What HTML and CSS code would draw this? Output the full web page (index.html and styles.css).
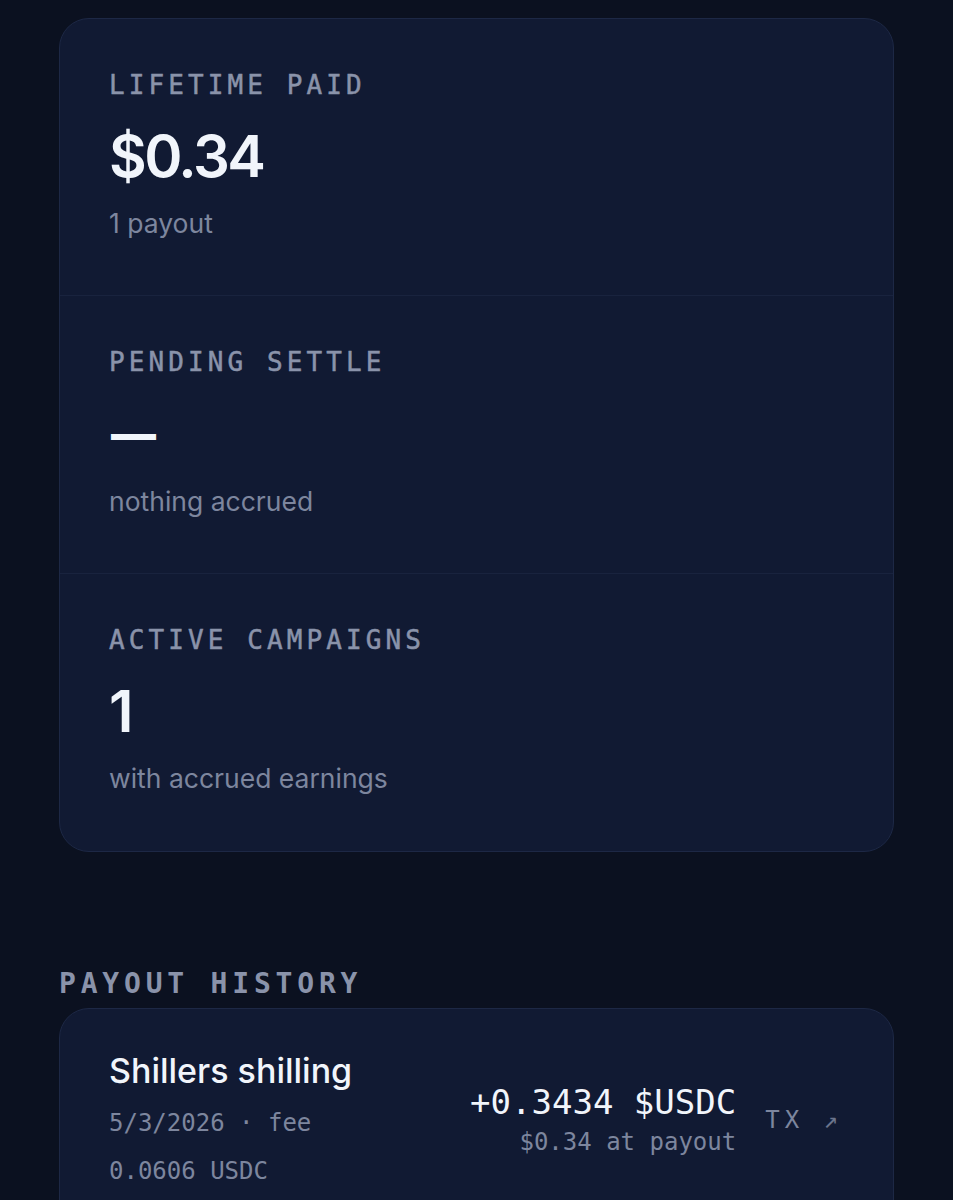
FILE: index.html
```
<!DOCTYPE html>
<html lang="en">
<head>
    <meta charset="UTF-8">
    <meta name="viewport" content="width=device-width, initial-scale=1.0">
    <title>Earnings</title>
    <link rel="stylesheet" href="styles.css">
</head>
<body>
    <div class="page">
        <!-- summary stats -->
        <div class="stats">
            <div class="stat">
                <div class="stat-label">Lifetime paid</div>
                <div class="stat-value">$0.34</div>
                <div class="stat-sub">1 payout</div>
            </div>
            <div class="stat">
                <div class="stat-label">Pending settle</div>
                <div class="stat-value"><span class="empty">—</span></div>
                <div class="stat-sub">nothing accrued</div>
            </div>
            <div class="stat">
                <div class="stat-label">Active campaigns</div>
                <div class="stat-value">1</div>
                <div class="stat-sub">with accrued earnings</div>
            </div>
        </div>

        <h2 class="section-title">Payout history</h2>
        <div class="payouts">
            <div class="payout">
                <div class="payout-info">
                    <div class="payout-name">Shillers shilling</div>
                    <div class="payout-meta">5/3/2026 · fee</div>
                    <div class="payout-meta small-gap">0.0606 USDC</div>
                </div>
                <div class="payout-amount">
                    <div class="amount">+0.3434 $USDC</div>
                    <div class="amount-usd">$0.34 at payout</div>
                </div>
                <a class="tx-link" href="#">TX <span class="arrow">↗</span></a>
            </div>
        </div>
    </div>
</body>
</html>
```
FILE: styles.css
```
body {
    margin: 0;
    padding: 0;
    background: #0b1120;
    font-family: Inter, "Noto Sans", sans-serif;
    color: #f1f5fb;
}
.page {
    padding: 18px 59px 0;
}
.stats {
    background: #111a33;
    border: 1px solid #1d2845;
    border-radius: 30px;
}
.stat {
    padding: 50px 49px 56px;
    border-top: 1px solid #19233e;
}
.stat:first-child {
    border-top: none;
}
.stat:last-child {
    padding-bottom: 57px;
}
.stat-label {
    font-family: "DejaVu Sans Mono", monospace;
    font-size: 26px;
    line-height: 32px;
    letter-spacing: 4.1px;
    text-transform: uppercase;
    color: #8a93aa;
    -webkit-text-stroke: 0.5px #8a93aa;
}
.stat-value {
    margin-top: 20px;
    font-size: 58px;
    line-height: 70px;
    font-weight: 600;
    letter-spacing: -2.5px;
    color: #f1f5fb;
}
.stat-value .empty {
    font-size: 45px;
    font-weight: 800;
    letter-spacing: 0;
    vertical-align: 4px;
    margin-left: 2px;
}
.stat-sub {
    margin-top: 16px;
    font-size: 26.5px;
    line-height: 32px;
    color: #7d869e;
}
.section-title {
    margin: 114px 0 6px;
    font-family: "DejaVu Sans Mono", monospace;
    font-size: 28px;
    line-height: 36px;
    font-weight: bold;
    letter-spacing: 4.8px;
    text-transform: uppercase;
    color: #8a93aa;
}
.payouts {
    background: #111a33;
    border: 1px solid #1d2845;
    border-radius: 30px;
}
.payout {
    display: flex;
    align-items: center;
    padding: 41px 50px 42px 49px;
}
.payout-info {
    flex: 1;
}
.payout-name {
    font-size: 34px;
    line-height: 42px;
    font-weight: 500;
    color: #f1f5fb;
}
.payout-meta {
    margin-top: 13px;
    font-family: "DejaVu Sans Mono", monospace;
    font-size: 24px;
    line-height: 36px;
    color: #7d869e;
}
.payout-meta.small-gap {
    margin-top: 12px;
}
.payout-amount {
    text-align: right;
    font-family: "DejaVu Sans Mono", monospace;
}
.amount {
    font-size: 34px;
    line-height: 40px;
    color: #f1f5fb;
}
.amount-usd {
    margin-top: 4px;
    font-size: 24px;
    line-height: 32px;
    color: #7d869e;
}
.tx-link {
    margin-left: 29px;
    font-family: "DejaVu Sans Mono", monospace;
    font-size: 24px;
    letter-spacing: 5px;
    color: #7d869e;
    text-decoration: none;
}
.tx-link .arrow {
    color: #6b748c;
}
```
